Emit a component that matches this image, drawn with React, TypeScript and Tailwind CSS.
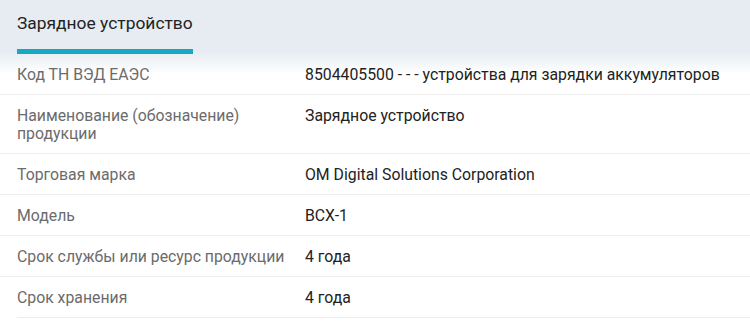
import React from "react";

const rows: [string, string][] = [
  ["Код ТН ВЭД ЕАЭС", "8504405500 - - - устройства для зарядки аккумуляторов"],
  ["Наименование (обозначение) продукции", "Зарядное устройство"],
  ["Торговая марка", "OM Digital Solutions Corporation"],
  ["Модель", "BCX-1"],
  ["Срок службы или ресурс продукции", "4 года"],
  ["Срок хранения", "4 года"],
];

export default function App() {
  return (
    <div
      className="w-[750px] h-[331px] overflow-hidden bg-[linear-gradient(to_bottom,#e6ecf2_0px,#e6ecf2_51px,#ffffff_74px)]"
      style={{ fontFamily: "Roboto, 'Noto Sans', sans-serif" }}
    >
      <div className="h-[54px] px-[17px] flex">
        <div className="flex flex-col">
          <div className="pt-[12px] h-[49px] text-[17.4px] leading-[22px] text-[#222]">
            Зарядное устройство
          </div>
          <div className="h-[5px] bg-[#17a9c1]" />
        </div>
      </div>
      <div>
        {rows.map(([k, v], i) => {
          const last = i === rows.length - 1;
          return (
            <div
              key={i}
              className={`flex border-b border-[#ededed] pt-[12px] pb-[10px] text-[15.8px] leading-[18px] ${
                last ? "ml-[17px]" : ""
              }`}
            >
              <div
                className={`shrink-0 text-[#6b6b6b] pr-[8px] ${
                  last ? "w-[288px]" : "w-[305px] pl-[17px]"
                }`}
              >
                {k}
              </div>
              <div className="text-[#222]">{v}</div>
            </div>
          );
        })}
      </div>
    </div>
  );
}
